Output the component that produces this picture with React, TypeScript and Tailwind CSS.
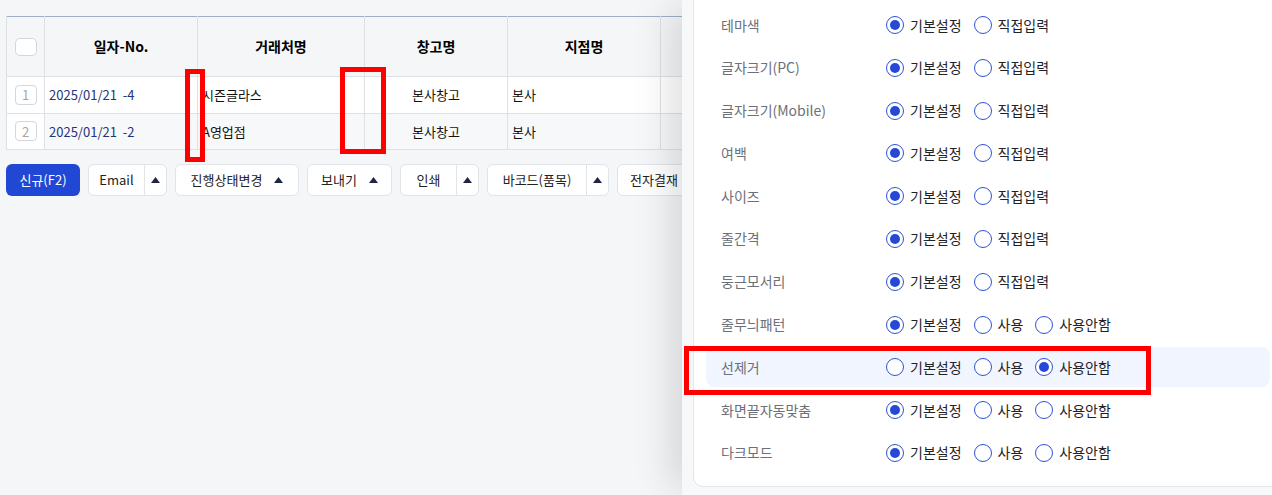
import React from "react";

const font = { fontFamily: '"Noto Sans CJK KR", "Noto Sans", sans-serif' };

type Opt = { label: string; checked?: boolean };

const two = (first = true): Opt[] => [
  { label: "기본설정", checked: first },
  { label: "직접입력" },
];
const three = (idx = 0): Opt[] => [
  { label: "기본설정", checked: idx === 0 },
  { label: "사용", checked: idx === 1 },
  { label: "사용안함", checked: idx === 2 },
];

const settings: { name: string; opts: Opt[]; active?: boolean }[] = [
  { name: "테마색", opts: two() },
  { name: "글자크기(PC)", opts: two() },
  { name: "글자크기(Mobile)", opts: two() },
  { name: "여백", opts: two() },
  { name: "사이즈", opts: two() },
  { name: "줄간격", opts: two() },
  { name: "둥근모서리", opts: two() },
  { name: "줄무늬패턴", opts: three(0) },
  { name: "선제거", opts: three(2), active: true },
  { name: "화면끝자동맞춤", opts: three(0) },
  { name: "다크모드", opts: three(0) },
];

const rows = [
  { no: 1, date: "2025/01/21  -4", client: "시즌글라스", store: "본사창고", branch: "본사", bg: "bg-white" },
  { no: 2, date: "2025/01/21  -2", client: "A영업점", store: "본사창고", branch: "본사", bg: "bg-[#f7f8fa]" },
];

const Radio = ({ checked }: { checked?: boolean }) => (
  <span className="flex h-[18px] w-[18px] items-center justify-center rounded-full border-[1.5px] border-[#2f52d9] bg-white">
    {checked && <span className="h-[10px] w-[10px] rounded-full bg-[#2648d6]" />}
  </span>
);

const Up = () => (
  <svg width="9" height="6" viewBox="0 0 9 6">
    <path d="M4.5 0 L9 6 L0 6 Z" fill="#1c2740" />
  </svg>
);

const BtnArrow = ({ label, w }: { label: string; w: string }) => (
  <div className={`flex h-8 ${w} shrink-0 items-center justify-center gap-3 rounded-md border border-[#e1e4e9] bg-white text-[13px] text-[#222]`}>
    <span>{label}</span>
    <Up />
  </div>
);

const BtnSplit = ({ label, w }: { label: string; w: string }) => (
  <div className="flex h-8 shrink-0 rounded-md border border-[#e1e4e9] bg-white text-[13px] text-[#222]">
    <span className={`flex ${w} items-center justify-center border-r border-[#e1e4e9]`}>{label}</span>
    <span className="flex w-[21px] items-center justify-center">
      <Up />
    </span>
  </div>
);

export default function App() {
  return (
    <div style={font} className="relative flex h-[495px] w-[1272px] overflow-hidden bg-[#f5f6f8]">
      {/* left list */}
      <div className="w-[682px] shrink-0 overflow-hidden pl-[6px] pt-4">
        <table className="w-[800px] table-fixed border-collapse text-[13px]">
          <colgroup>
            <col className="w-[38px]" />
            <col className="w-[153px]" />
            <col className="w-[167px]" />
            <col className="w-[143px]" />
            <col className="w-[153px]" />
            <col />
          </colgroup>
          <thead>
            <tr className="h-[60px] border-t border-t-[#9fb0c4] bg-[#f5f6f8] text-[14px] font-bold text-black">
              <th className="border-r border-l border-b border-[#dde1e6]">
                <span className="mx-auto block h-[18px] w-[22px] rounded-[5px] border border-[#d3d7dd] bg-white" />
              </th>
              <th className="border-r border-b border-[#dde1e6]">일자-No.</th>
              <th className="border-r border-b border-[#dde1e6]">거래처명</th>
              <th className="border-r border-b border-[#dde1e6]">창고명</th>
              <th className="border-r border-b border-[#dde1e6]">지점명</th>
              <th className="border-r border-b border-[#dde1e6]" />
            </tr>
          </thead>
          <tbody>
            {rows.map((r) => (
              <tr key={r.no} className={`h-[36.5px] ${r.bg}`}>
                <td className="border border-[#dde1e6] bg-white">
                  <span className="mx-auto flex h-[20px] w-[22px] items-center justify-center rounded-[4px] border border-[#d3d7dd] text-[13px] text-[#a2a7ae]">
                    {r.no}
                  </span>
                </td>
                <td className="border border-[#dde1e6] px-1 whitespace-pre text-[#26337a]">{r.date}</td>
                <td className="border border-[#dde1e6] px-1 text-[#111]">{r.client}</td>
                <td className="border border-[#dde1e6] px-1 text-center text-[#111]">{r.store}</td>
                <td className="border border-[#dde1e6] px-1 text-[#111]">{r.branch}</td>
                <td className="border border-[#dde1e6]" />
              </tr>
            ))}
          </tbody>
        </table>

        <div className="mt-[14px] flex gap-2">
          <div className="flex h-8 w-[74px] shrink-0 items-center justify-center rounded-md bg-[#2148d4] text-[13px] text-white">
            신규(F2)
          </div>
          <BtnSplit label="Email" w="w-[56px]" />
          <BtnArrow label="진행상태변경" w="w-[124px]" />
          <BtnArrow label="보내기" w="w-[85px]" />
          <BtnSplit label="인쇄" w="w-[56px]" />
          <BtnSplit label="바코드(품목)" w="w-[99px]" />
          <div className="flex h-8 w-[110px] shrink-0 items-center gap-3 rounded-md border border-[#e1e4e9] bg-white pl-3 text-[13px] text-[#222]">
            <span>전자결재</span>
            <Up />
          </div>
        </div>
      </div>

      {/* settings drawer */}
      <div className="relative z-10 flex-1 overflow-hidden bg-[#f7f8fa] pl-[11px] shadow-[-18px_0_36px_-6px_rgba(0,0,0,0.13)]">
        <div className="-mt-4 w-[590px] rounded-bl-[10px] border border-[#e3e6ea] bg-white pt-[20px] pb-[13px]">
          <div className="flex flex-col gap-[2.8px] px-3">
            {settings.map((s) => (
              <div
                key={s.name}
                className={`flex h-[40px] items-center rounded-lg pl-[15px] ${s.active ? "bg-[#f0f5ff]" : ""}`}
              >
                <span className="w-[165px] shrink-0 text-[14px] text-[#6b7079]">{s.name}</span>
                <div className="flex items-center gap-3">
                  {s.opts.map((o) => (
                    <label key={o.label} className="flex items-center gap-[6px] text-[14px] text-[#1f2328]">
                      <Radio checked={o.checked} />
                      {o.label}
                    </label>
                  ))}
                </div>
              </div>
            ))}
          </div>
        </div>
      </div>

      {/* annotation boxes */}
      <div className="pointer-events-none absolute top-[69px] left-[185px] z-20 h-[93px] w-[20px] border-[5px] border-[#ff0000]" />
      <div className="pointer-events-none absolute top-[67px] left-[340px] z-20 h-[87px] w-[46px] border-[5px] border-[#ff0000]" />
      <div className="pointer-events-none absolute top-[346px] left-[684px] z-20 h-[49px] w-[467px] border-[5px] border-[#ff0000]" />
    </div>
  );
}
